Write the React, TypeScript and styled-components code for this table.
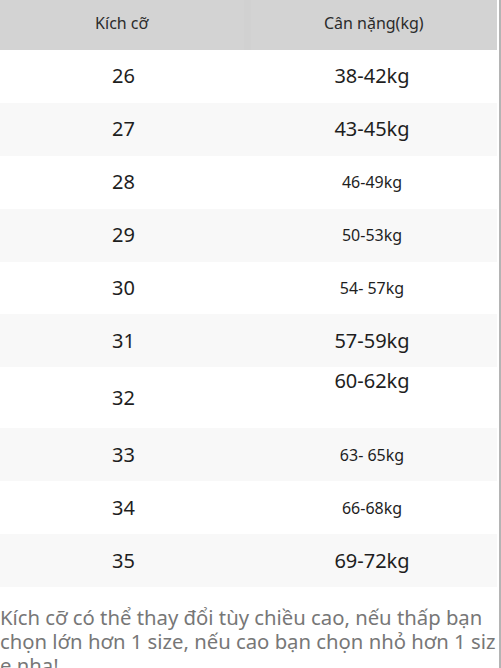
import styled, { createGlobalStyle } from "styled-components";

type TRow = {
  size: string;
  weight: string;
  small?: boolean;
  tall?: boolean;
};

const rows: TRow[] = [
  { size: "26", weight: "38-42kg" },
  { size: "27", weight: "43-45kg" },
  { size: "28", weight: "46-49kg", small: true },
  { size: "29", weight: "50-53kg", small: true },
  { size: "30", weight: "54- 57kg", small: true },
  { size: "31", weight: "57-59kg" },
  { size: "32", weight: "60-62kg", tall: true },
  { size: "33", weight: "63- 65kg", small: true },
  { size: "34", weight: "66-68kg", small: true },
  { size: "35", weight: "69-72kg" },
];

const GlobalStyle = createGlobalStyle`
  html, body {
    margin: 0;
    padding: 0;
    background: #ffffff;
    font-family: "Noto Sans", "Open Sans", sans-serif;
    overflow: hidden;
  }
`;

const Page = styled.div`
  width: 501px;
  height: 668px;
  overflow: hidden;
  position: relative;
`;

const ScrollEdge = styled.div`
  position: absolute;
  top: 0;
  right: 0;
  width: 2px;
  height: 668px;
  background: #b4b4b4;
`;

const Table = styled.table`
  width: 497px;
  border-collapse: collapse;
  table-layout: fixed;
`;

const HeadCell = styled.th<{ $right?: boolean }>`
  height: 50px;
  padding: 0 0 5px;
  box-sizing: border-box;
  background: #d3d3d3;
  color: #2b2b2b;
  font-size: 16px;
  font-weight: 400;
  text-align: center;
  ${(p) => !p.$right && "border-right: 7px solid #d1d1d1;"}
`;

const Row = styled.tr<{ $alt: boolean }>`
  background: ${(p) => (p.$alt ? "#f8f8f8" : "#ffffff")};
`;

const Cell = styled.td<{ $small?: boolean; $tall?: boolean; $top?: boolean }>`
  height: ${(p) => (p.$tall ? "61px" : "52.9px")};
  box-sizing: border-box;
  padding: ${(p) => (p.$top ? "2px 0 0" : "0")};
  text-align: center;
  vertical-align: ${(p) => (p.$top ? "top" : "middle")};
  color: #1e1e1e;
  font-size: ${(p) => (p.$small ? "16px" : "20px")};
  line-height: 24px;
`;

const Note = styled.p`
  width: 501px;
  margin: 18px 0 0;
  color: #777777;
  font-size: 20.3px;
  line-height: 24px;
  word-break: break-all;
`;

export default function App() {
  return (
    <>
      <GlobalStyle />
      <Page>
        <Table>
          <colgroup>
            <col style={{ width: "247px" }} />
            <col />
          </colgroup>
          <thead>
            <tr>
              <HeadCell>Kích cỡ</HeadCell>
              <HeadCell $right>Cân nặng(kg)</HeadCell>
            </tr>
          </thead>
          <tbody>
            {rows.map((r, i) => (
              <Row key={r.size} $alt={i % 2 === 1}>
                <Cell $tall={r.tall}>{r.size}</Cell>
                <Cell $tall={r.tall} $small={r.small} $top={r.tall}>
                  {r.weight}
                </Cell>
              </Row>
            ))}
          </tbody>
        </Table>
        <Note>
          Kích cỡ có thể thay đổi tùy chiều cao, nếu thấp bạn
          <br />
          chọn lớn hơn 1 size, nếu cao bạn chọn nhỏ hơn 1 size nha!
        </Note>
        <ScrollEdge />
      </Page>
    </>
  );
}
